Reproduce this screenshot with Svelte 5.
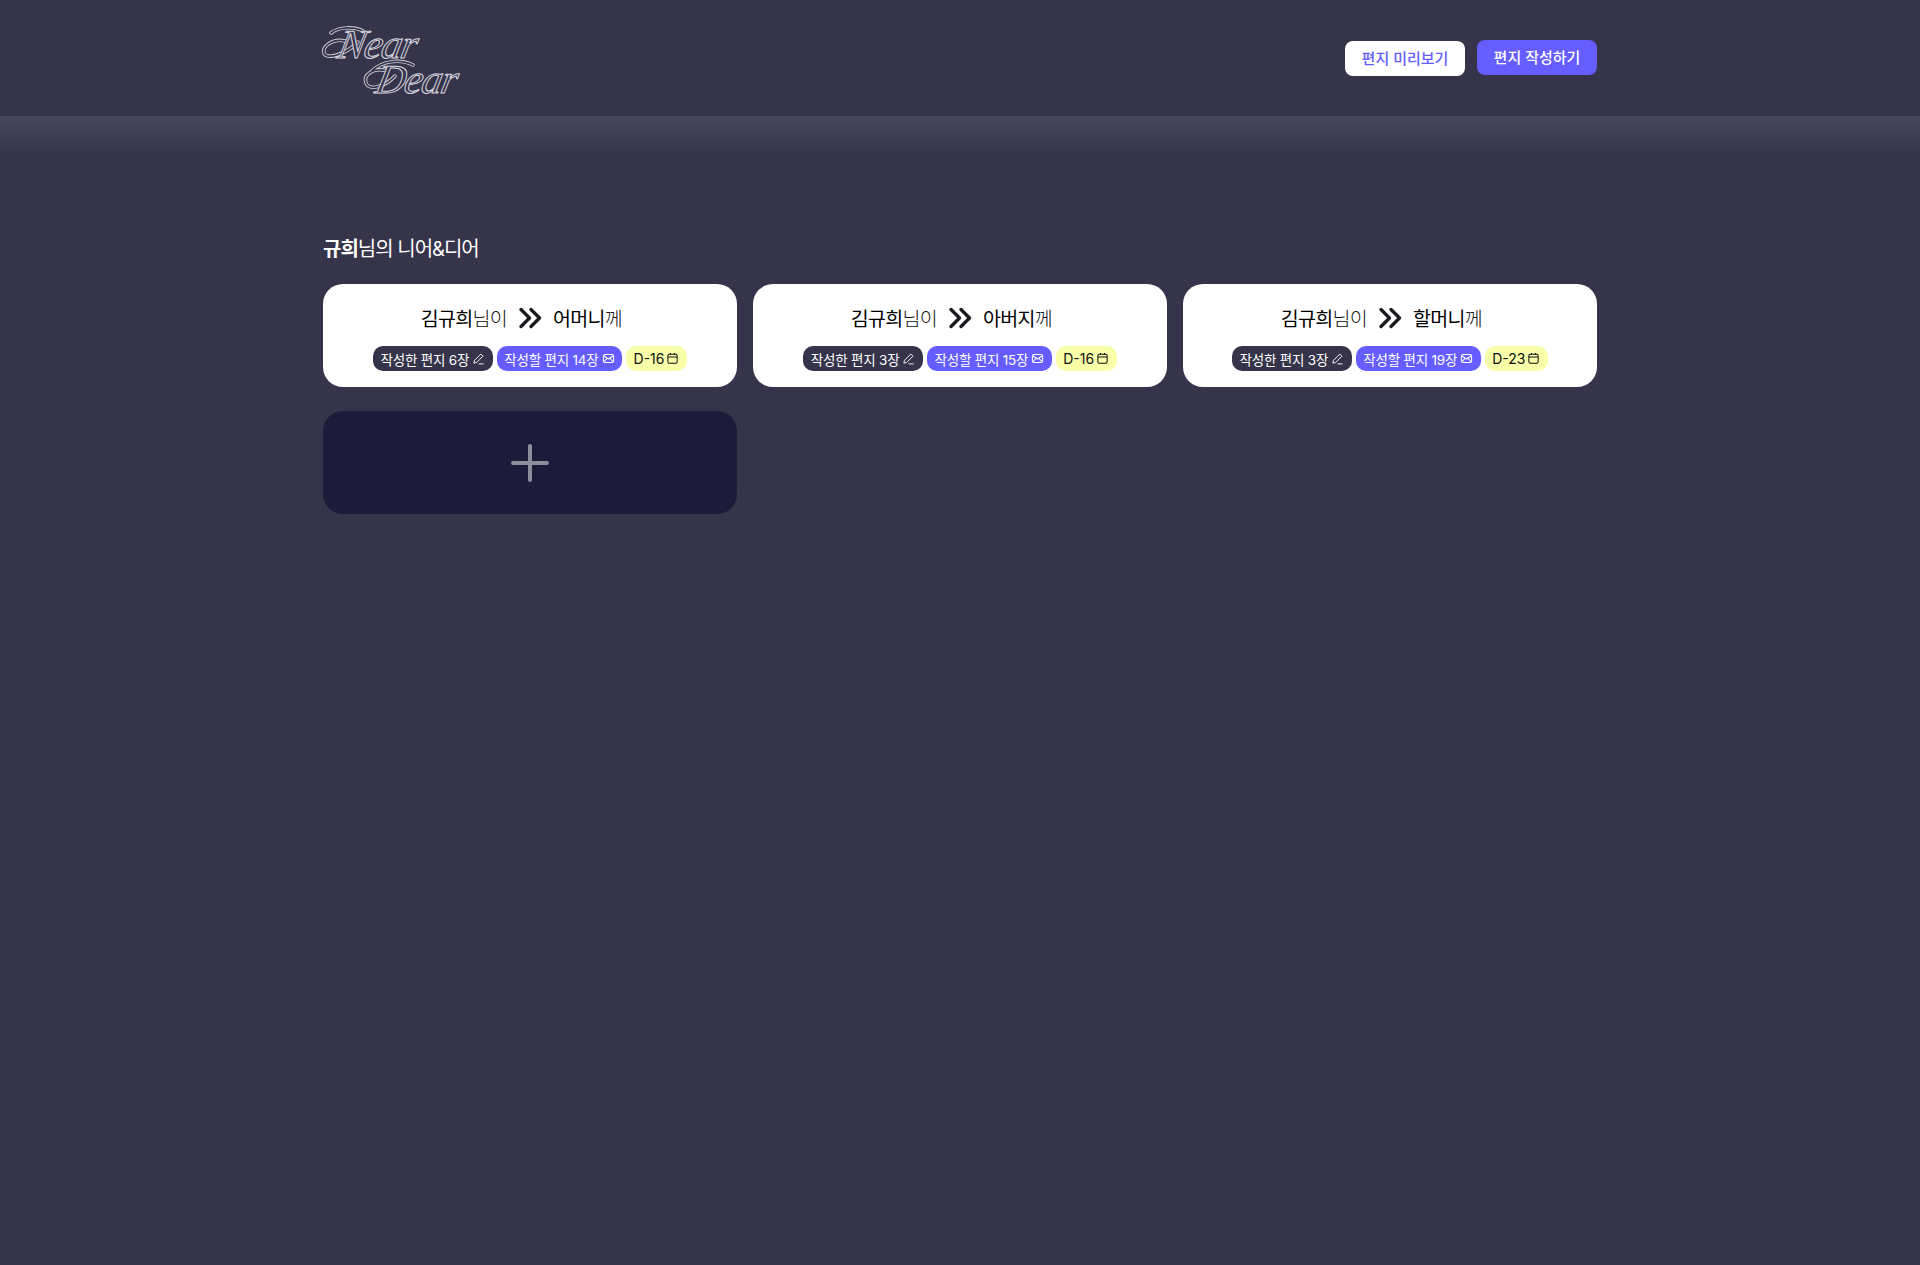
<script>
  const cards = [
    { to: "어머니", written: 6, left: 14, day: 16 },
    { to: "아버지", written: 3, left: 15, day: 16 },
    { to: "할머니", written: 3, left: 19, day: 23 }
  ];
  // decorative loops of the logo, drawn twice for the outlined look
  const swashes = [
    "M8 12C17 5 32 6 40 10",
    "M22 20C9 17-1 26 1 32C3 39 22 34 35 21",
    "M49 50C60 39 78 38 90 44",
    "M64 50C50 46 40 54 43 62C46 70 62 66 72 55"
  ];
</script>

<div class="page">
  <header>
    <div class="inner head">
      <svg class="logo" width="140" height="76" viewBox="0 0 140 76">
        {#each swashes as d}
          <path class="swash-out" {d} />
        {/each}
        {#each swashes as d}
          <path class="swash-in" {d} />
        {/each}
        <text transform="translate(13 37) skewX(-12)" class="script">Near</text>
        <text transform="translate(51 72) skewX(-12)" class="script">Dear</text>
      </svg>
      <div class="actions">
        <button class="preview">편지 미리보기</button>
        <button class="write">편지 작성하기</button>
      </div>
    </div>
  </header>
  <div class="shade"></div>

  <main class="inner">
    <h2><b>규희</b>님의 니어&디어</h2>
    <div class="grid">
      {#each cards as c}
        <div class="card">
          <div class="title">
            <span class="from"><b>김규희</b>님이</span>
            <svg width="24" height="24" viewBox="0 0 24 24" fill="none" stroke="#1b1b1f" stroke-width="3.4" stroke-linecap="round" stroke-linejoin="round">
              <path d="M3 3.500l8.500 8.500-8.500 8.500M13 3.500l8.500 8.500-8.500 8.500" />
            </svg>
            <span><b>{c.to}</b>께</span>
          </div>
          <div class="badges">
            <span class="badge dark">작성한 편지 {c.written}장
              <svg width="13" height="13" viewBox="0 0 14 14" fill="none" stroke="currentColor" stroke-width="1" stroke-linejoin="round">
                <path d="M2 12l.7-3L9.500 2.200l2.300 2.300L5 11.300zM7 12.800h5.500" />
              </svg>
            </span>
            <span class="badge purple">작성할 편지 {c.left}장
              <svg width="13" height="13" viewBox="0 0 14 14" fill="none" stroke="currentColor" stroke-width="1.100" stroke-linejoin="round">
                <rect x="1.500" y="2.800" width="11" height="8.400" rx="1.800" />
                <path d="M1.800 4l5.200 3.500L12.200 4M2 10.500l3.500-3.700M12 10.500L8.500 6.800" />
              </svg>
            </span>
            <span class="badge yellow">D-{c.day}
              <svg width="13" height="13" viewBox="0 0 14 14" fill="none" stroke="currentColor" stroke-width="1.100">
                <rect x="2" y="2.500" width="10" height="9.500" rx="1.500" />
                <path d="M2 5.500h10M4.800 1v2M9.200 1v2" />
              </svg>
            </span>
          </div>
        </div>
      {/each}
      <button class="add" aria-label="추가">
        <svg width="40" height="40" viewBox="0 0 40 40" fill="none" stroke="#8e8d9c" stroke-width="4" stroke-linecap="round">
          <path d="M20 3v34M3 20h34" />
        </svg>
      </button>
    </div>
  </main>
</div>

<style>
  :global(body) {
    background: #36344a;
  }
  .page {
    min-height: 1265px;
    background: #36344a;
    font-family: Inter, "Noto Sans CJK KR", sans-serif;
    color: #fff;
  }
  .inner {
    width: 1274px;
    margin: 0 auto;
  }
  header {
    height: 116px;
  }
  .head {
    height: 100%;
    display: flex;
    justify-content: space-between;
    align-items: center;
  }
  .logo {
    margin-top: 2px;
    overflow: visible;
  }
  .script {
    font-family: "Liberation Serif", serif;
    font-style: italic;
    font-size: 41px;
    letter-spacing: -1px;
    fill: #36344a;
    stroke: #d9d9e0;
    stroke-width: 1;
  }
  .swash-out {
    fill: none;
    stroke: #d9d9e0;
    stroke-width: 3.500;
    stroke-linecap: round;
  }
  .swash-in {
    fill: none;
    stroke: #36344a;
    stroke-width: 1.800;
    stroke-linecap: round;
  }
  .actions {
    display: flex;
    gap: 12px;
    align-items: flex-start;
  }
  button {
    border: none;
    font-family: inherit;
    cursor: pointer;
  }
  .actions button {
    width: 120px;
    height: 35px;
    padding: 0 0 2px;
    border-radius: 8px;
    font-size: 15px;
    font-weight: 500;
  }
  .preview {
    background: #fff;
    color: #655dff;
    margin-top: 1px;
  }
  .write {
    background: #655dff;
    color: #fff;
  }
  .shade {
    height: 38px;
    background: linear-gradient(#4a485e, #36344a);
  }
  h2 {
    margin: 0;
    padding-top: 80px;
    font-size: 20px;
    line-height: 30px;
    font-weight: 400;
    letter-spacing: -1px;
  }
  h2 b {
    font-weight: 700;
  }
  .grid {
    margin-top: 20px;
    display: grid;
    grid-template-columns: repeat(3, 414px);
    column-gap: 16px;
    row-gap: 24px;
  }
  .card {
    height: 103px;
    background: #fff;
    border-radius: 20px;
    color: #111;
    display: flex;
    flex-direction: column;
    align-items: center;
    padding-top: 19px;
    box-sizing: border-box;
  }
  .title {
    width: 100%;
    display: grid;
    grid-template-columns: 1fr auto 1fr;
    align-items: center;
    column-gap: 11px;
    height: 28px;
    font-size: 19.500px;
    font-weight: 300;
    letter-spacing: -0.7px;
    color: #111;
  }
  .from {
    text-align: right;
  }
  .title b {
    font-weight: 400;
    color: #000;
  }
  .badges {
    margin-top: 15px;
    display: flex;
    gap: 4px;
  }
  .badge {
    height: 25px;
    padding: 0 7.500px;
    border-radius: 10px;
    display: flex;
    align-items: center;
    gap: 3px;
    font-size: 14px;
    white-space: nowrap;
  }
  .dark {
    background: #36344a;
    color: #fff;
    font-size: 13.500px;
    letter-spacing: -0.2px;
  }
  .purple {
    background: #655dff;
    color: #fff;
    font-size: 13.500px;
    letter-spacing: -0.2px;
  }
  .yellow {
    background: #f9ffa8;
    color: #111;
    gap: 2px;
  }
  .add {
    height: 103px;
    background: #1c1c3a;
    border-radius: 20px;
    display: flex;
    align-items: center;
    justify-content: center;
  }
</style>
